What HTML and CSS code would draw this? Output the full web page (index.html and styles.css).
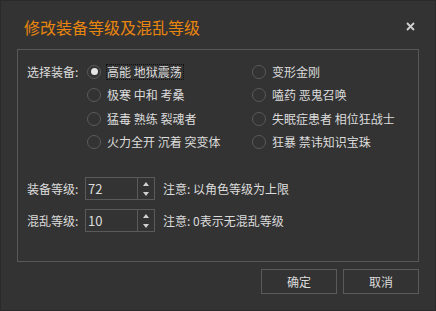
FILE: index.html
```html
<!DOCTYPE html>
<html lang="zh-CN">
<head>
    <meta charset="UTF-8">
    <title>修改装备等级及混乱等级</title>
    <link rel="stylesheet" href="styles.css">
</head>
<body>
    <div class="dialog">
        <div class="titlebar">
            <span class="title">修改装备等级及混乱等级</span>
            <svg class="close" width="9" height="9" viewBox="0 0 9 9">
                <path d="M1 1 L8 8 M8 1 L1 8" stroke="#d0d0d0" stroke-width="1.8" fill="none"/>
            </svg>
        </div>

        <div class="group">
            <!-- 装备选择 -->
            <div class="equip-row">
                <span class="label">选择装备:</span>
                <div class="radios">
                    <div class="radio checked"><span class="circle"></span><span class="text focus">高能 地狱震荡</span></div>
                    <div class="radio"><span class="circle"></span><span class="text">变形金刚</span></div>
                    <div class="radio"><span class="circle"></span><span class="text">极寒 中和 考桑</span></div>
                    <div class="radio"><span class="circle"></span><span class="text">嗑药 恶鬼召唤</span></div>
                    <div class="radio"><span class="circle"></span><span class="text">猛毒 熟练 裂魂者</span></div>
                    <div class="radio"><span class="circle"></span><span class="text">失眠症患者 相位狂战士</span></div>
                    <div class="radio"><span class="circle"></span><span class="text">火力全开 沉着 突变体</span></div>
                    <div class="radio"><span class="circle"></span><span class="text">狂暴 禁讳知识宝珠</span></div>
                </div>
            </div>

            <!-- 等级 -->
            <div class="level-row first">
                <span class="label">装备等级:</span>
                <div class="spinbox">
                    <span class="value">72</span>
                    <span class="arrows"><span class="up"></span><span class="down"></span></span>
                </div>
                <span class="note">注意: 以角色等级为上限</span>
            </div>
            <div class="level-row">
                <span class="label">混乱等级:</span>
                <div class="spinbox">
                    <span class="value">10</span>
                    <span class="arrows"><span class="up"></span><span class="down"></span></span>
                </div>
                <span class="note">注意: 0表示无混乱等级</span>
            </div>
        </div>

        <div class="buttons">
            <button class="btn">确定</button>
            <button class="btn">取消</button>
        </div>
    </div>
</body>
</html>
```

FILE: styles.css
```css
body {
    margin: 0;
    padding: 0;
    background-color: #333333;
    font-family: "Noto Sans CJK SC", "Noto Sans", sans-serif;
    font-size: 12px;
    color: #dcdcdc;
}
.dialog {
    width: 436px;
    height: 311px;
    box-sizing: border-box;
    border: 1px solid #2a2a2a;
    background-color: #333333;
}
.titlebar {
    height: 48px;
    display: flex;
    align-items: center;
    justify-content: space-between;
    padding: 0 20px 0 23px;
}
.title {
    color: #e8850f;
    font-size: 16px;
    line-height: 20px;
    margin-top: 4px;
}
.close {
    margin-top: 3px;
}
.group {
    margin: 0 16px;
    height: 213px;
    box-sizing: border-box;
    border: 1px solid #585858;
    padding: 10px 0 0 9px;
}
.equip-row {
    display: flex;
}
.label {
    width: 60px;
    line-height: 23.5px;
    white-space: nowrap;
}
.radios {
    display: grid;
    grid-template-columns: 165px 165px;
    grid-auto-rows: 23.5px;
}
.radio {
    display: flex;
    align-items: center;
}
.circle {
    width: 14px;
    height: 14px;
    box-sizing: border-box;
    border: 1px solid #5a5a5a;
    border-radius: 50%;
    margin-right: 6px;
    display: flex;
    align-items: center;
    justify-content: center;
}
.radio.checked .circle::after {
    content: "";
    width: 7px;
    height: 7px;
    border-radius: 50%;
    background-color: #e6e6e6;
}
.text {
    line-height: 14px;
    white-space: nowrap;
}
.text.focus {
    outline: 1px dotted #111;
    outline-offset: 0;
    padding: 0 1px 0 0;
}
.level-row {
    display: flex;
    align-items: center;
    height: 23px;
    margin-top: 9px;
}
.level-row.first {
    margin-top: 23px;
}
.level-row .label {
    width: 58px;
}
.spinbox {
    width: 70px;
    height: 23px;
    box-sizing: border-box;
    border: 1px solid #5a5a5a;
    display: flex;
    margin-right: 8px;
}
.spinbox .value {
    flex: 1;
    padding-left: 2px;
    line-height: 21px;
    font-size: 13px;
}
.spinbox .arrows {
    width: 16px;
    border-left: 1px solid #5a5a5a;
    display: flex;
    flex-direction: column;
    align-items: center;
    justify-content: center;
    gap: 6px;
}
.arrows .up {
    width: 0;
    height: 0;
    border-left: 3.5px solid transparent;
    border-right: 3.5px solid transparent;
    border-bottom: 4px solid #d0d0d0;
}
.arrows .down {
    width: 0;
    height: 0;
    border-left: 3.5px solid transparent;
    border-right: 3.5px solid transparent;
    border-top: 4px solid #d0d0d0;
}
.note {
    white-space: nowrap;
}
.buttons {
    display: flex;
    justify-content: flex-end;
    gap: 6px;
    margin: 7px 16px 0 0;
}
.btn {
    width: 76px;
    height: 25px;
    background-color: #333333;
    border: 1px solid #5a5a5a;
    color: #dcdcdc;
    font-family: "Noto Sans CJK SC", "Noto Sans", sans-serif;
    font-size: 12px;
    padding: 0;
}
```
